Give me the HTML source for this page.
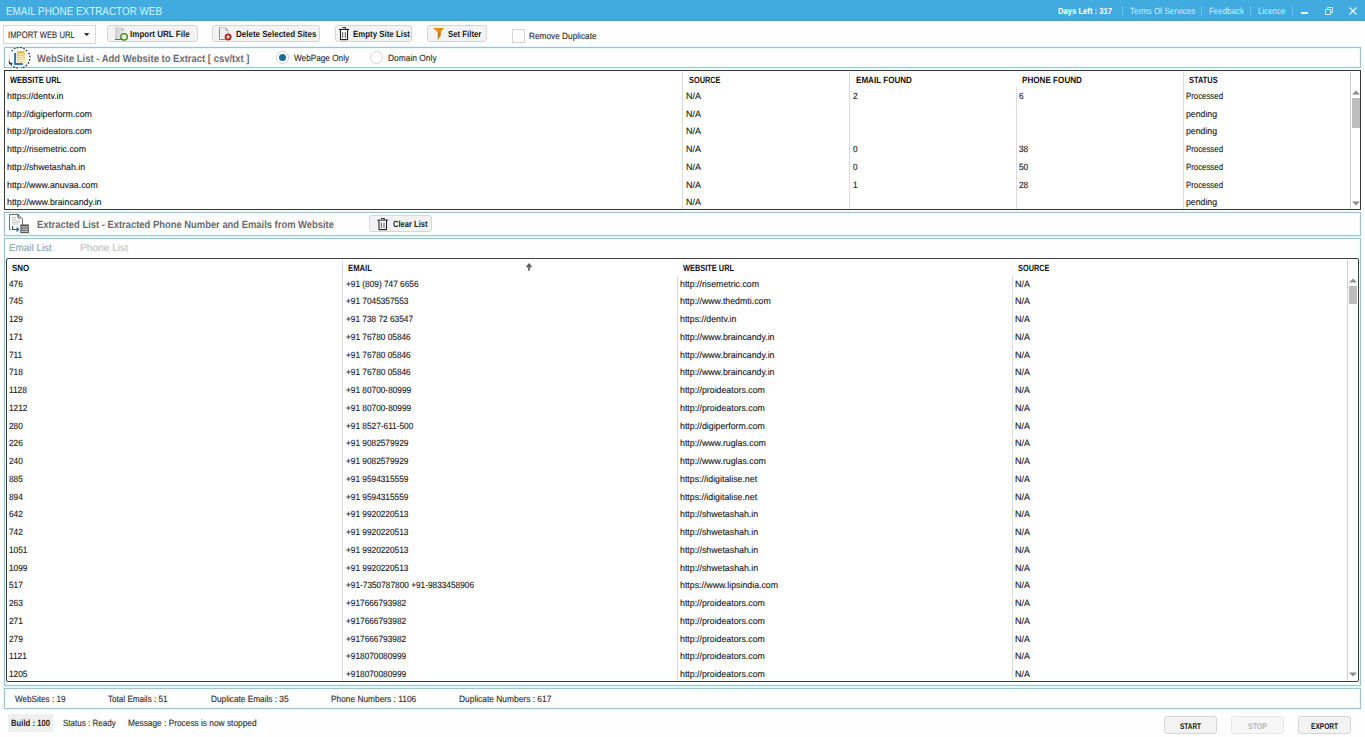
<!DOCTYPE html>
<html><head><meta charset="utf-8">
<style>
html,body{margin:0;padding:0;}
body{width:1365px;height:737px;position:relative;overflow:hidden;background:#fefefe;font-family:"Liberation Sans",sans-serif;}
.a{position:absolute;box-sizing:border-box;}
.t{position:absolute;white-space:nowrap;transform-origin:0 0;text-rendering:geometricPrecision;}
.btn{position:absolute;box-sizing:border-box;background:#f3f3f3;border:1px solid #d6d6d6;border-radius:3px;}
.pnl{position:absolute;box-sizing:border-box;border:1px solid #a2c3c8;background:#fefefe;box-shadow:0 0 0 1px #e4f7f9, inset 0 0 0 1px #eefafb;}
.w{-webkit-text-stroke:0.15px currentColor;}
.vl{position:absolute;width:1px;background:#dcdcdc;}
.sep{position:absolute;width:1px;background:#6fc0e6;top:6px;height:10px;}
</style></head><body>
<!-- title bar -->
<div class="a" style="left:0;top:0;width:1365px;height:20px;background:#41abe0;"></div>
<div class="a" style="left:0;top:20px;width:1365px;height:1px;background:#4d9cc2;"></div>
<div class="a" style="left:0;top:21px;width:1365px;height:1px;background:#e2f8fc;"></div>
<div class="sep" style="left:1122px"></div>
<div class="sep" style="left:1201px"></div>
<div class="sep" style="left:1250px"></div>
<div class="sep" style="left:1292px"></div>
<div class="a" style="left:1301px;top:12px;width:7px;height:2px;background:#e8f7fd;"></div>
<svg class="a" style="left:1324px;top:6px" width="10" height="9" viewBox="0 0 10 9"><rect x="1.5" y="3.5" width="5" height="5" fill="none" stroke="#dcf1fa" stroke-width="0.9"/><path d="M3.5 3.5V1.5H8.5V6.5H6.5" fill="none" stroke="#dcf1fa" stroke-width="0.9"/></svg>
<svg class="a" style="left:1349px;top:7px" width="8" height="8" viewBox="0 0 8 8"><path d="M0.5 0.5L7.5 7.5M7.5 0.5L0.5 7.5" stroke="#eef9ff" stroke-width="1.1"/></svg>

<!-- toolbar -->
<div class="a" style="left:3px;top:25px;width:93px;height:19px;background:#fff;border:1px solid #d9d9d9;"></div>
<svg class="a" style="left:84px;top:33px" width="6" height="4"><path d="M0 0H5.4L2.7 3.3Z" fill="#333"/></svg>
<div class="btn" style="left:107px;top:25px;width:91px;height:17px;"></div>
<div class="btn" style="left:212px;top:25px;width:108px;height:17px;"></div>
<div class="btn" style="left:335px;top:25px;width:77px;height:17px;"></div>
<div class="btn" style="left:427px;top:25px;width:60px;height:17px;"></div>
<div class="a" style="left:512px;top:29px;width:13px;height:14px;background:#fff;border:1px solid #d4d4d4;"></div>

<!-- website list header panel -->
<div class="pnl" style="left:4px;top:47px;width:1357px;height:21px;"></div>
<div class="a" style="left:276px;top:51px;width:13px;height:13px;border-radius:50%;border:1px solid #cfcfcf;background:#fff;"></div>
<div class="a" style="left:279px;top:54px;width:7px;height:7px;border-radius:50%;background:#1b6a98;"></div>
<div class="a" style="left:370px;top:51px;width:13px;height:13px;border-radius:50%;border:1px solid #d4d4d4;background:#fff;"></div>

<!-- table 1 -->
<div class="a" style="left:4px;top:70px;width:1357px;height:140px;border:1px solid #383838;background:#fff;"></div>
<div class="vl" style="left:682px;top:72px;height:137px"></div>
<div class="vl" style="left:849px;top:72px;height:137px"></div>
<div class="vl" style="left:1016px;top:87px;height:122px"></div>
<div class="vl" style="left:1183px;top:72px;height:137px"></div>
<div class="vl" style="left:1350px;top:72px;height:137px;background:#d0d0d0"></div>
<svg class="a" style="left:1352px;top:90px" width="8" height="5"><path d="M0 4.5L4 0.5L8 4.5Z" fill="#8c8c8c"/></svg>
<div class="a" style="left:1352px;top:98px;width:8px;height:30px;background:#bdbdbd;"></div>
<svg class="a" style="left:1352px;top:201px" width="8" height="5"><path d="M0 0.5H8L4 4.5Z" fill="#8c8c8c"/></svg>

<!-- extracted header panel -->
<div class="pnl" style="left:4px;top:212px;width:1357px;height:24px;"></div>
<div class="btn" style="left:369px;top:215px;width:63px;height:17px;"></div>

<!-- tab panel -->
<div class="pnl" style="left:4px;top:238px;width:1357px;height:448px;"></div>
<!-- table 2 -->
<div class="a" style="left:6px;top:258px;width:1353px;height:424px;border:1px solid #3c3c3c;border-radius:2px;background:#fff;"></div>
<div class="vl" style="left:342px;top:260px;height:421px"></div>
<div class="vl" style="left:677px;top:275px;height:406px"></div>
<div class="vl" style="left:1012px;top:275px;height:406px"></div>
<div class="vl" style="left:1347px;top:260px;height:421px;background:#d0d0d0"></div>
<svg class="a" style="left:1349px;top:278px" width="8" height="5"><path d="M0 4.5L4 0.5L8 4.5Z" fill="#8c8c8c"/></svg>
<div class="a" style="left:1349px;top:286px;width:8px;height:18px;background:#bdbdbd;"></div>
<svg class="a" style="left:1349px;top:672px" width="8" height="5"><path d="M0 0.5H8L4 4.5Z" fill="#8c8c8c"/></svg>
<svg class="a" style="left:525px;top:263px" width="8" height="9"><path d="M4 1.5V7.8" stroke="#5a5a5a" stroke-width="1.7"/><path d="M1.6 4.3L4 1.3L6.4 4.3" fill="none" stroke="#5a5a5a" stroke-width="1.6"/></svg>

<!-- stats panel -->
<div class="pnl" style="left:4px;top:688px;width:1357px;height:21px;"></div>

<!-- status bar -->
<div class="a" style="left:8px;top:714px;width:45px;height:18px;background:#f0f0f0;"></div>
<div class="btn" style="left:1164px;top:716px;width:53px;height:18px;"></div>
<div class="btn" style="left:1231px;top:716px;width:53px;height:18px;background:#f7f7f7;border-color:#e6e6e6"></div>
<div class="btn" style="left:1298px;top:716px;width:53px;height:18px;"></div>


<!-- import url file icon -->
<svg class="a" style="left:114px;top:26px" width="16" height="16" viewBox="0 0 16 16">
<defs><linearGradient id="gd" x1="0" y1="0" x2="1" y2="0"><stop offset="0" stop-color="#cfcfcf"/><stop offset="1" stop-color="#ededed"/></linearGradient></defs>
<path d="M1 1H7.5L11 4.5V13.5H1Z" fill="url(#gd)"/>
<path d="M7.5 1V4.5H11" fill="#bdbdbd"/>
<path d="M1 13.5H7" stroke="#555" stroke-width="0.9"/>
<circle cx="10.1" cy="10.8" r="3.3" fill="#c7e9a3" stroke="#3c7a1f" stroke-width="1.2"/>
<path d="M10.1 8.9V12.7M8.2 10.8H12" stroke="#f4fff0" stroke-width="1.1"/>
</svg>
<!-- delete icon -->
<svg class="a" style="left:218px;top:26px" width="16" height="16" viewBox="0 0 16 16">
<path d="M1.5 1.5H7.5L10.5 4.5V13.5H1.5Z" fill="#efefef"/>
<path d="M1.5 1.5H7.5L10.5 4.5V8" fill="none" stroke="#c8c8c8" stroke-width="0.9"/>
<path d="M1.5 1.5V13.5H7" fill="none" stroke="#8f8f8f" stroke-width="1"/>
<path d="M7.5 1.5V4.5H10.5Z" fill="#9a9a9a"/>
<circle cx="10.1" cy="10.9" r="3.5" fill="#a32e1d"/>
<circle cx="10.1" cy="10.9" r="1.7" fill="#efb09e"/>
<path d="M9.2 10L11 11.8M11 10L9.2 11.8" stroke="#fff6f2" stroke-width="0.8"/>
</svg>
<!-- empty site list trash -->
<svg class="a" style="left:338px;top:26px" width="12" height="15" viewBox="0 0 12 15">
<path d="M4.5 1.5H7.5V3" fill="none" stroke="#333" stroke-width="1"/>
<path d="M1 3.5H11" stroke="#222" stroke-width="1.3"/>
<path d="M2.5 4V13.5H9.5V4" fill="#fff" stroke="#222" stroke-width="1.1"/>
<path d="M2.5 13.6H9.5" stroke="#222" stroke-width="1.2"/>
<path d="M4.7 6V12M7.3 6V12" stroke="#444" stroke-width="0.9"/>
</svg>
<!-- filter funnel -->
<svg class="a" style="left:432px;top:27px" width="13" height="14" viewBox="0 0 13 14">
<path d="M1 1H12L8.6 5.2V8.5L5.8 12.8V5.2Z" fill="#e88a12"/>
<path d="M5.8 5.2L8.6 5.2V8.5L5.8 12.8Z" fill="#d07a10"/>
</svg>
<!-- website list icon -->
<svg class="a" style="left:7px;top:46px" width="25" height="23" viewBox="0 0 25 23">
<defs><linearGradient id="yd" x1="0" y1="0" x2="0" y2="1"><stop offset="0" stop-color="#f3b64c"/><stop offset="1" stop-color="#fbe3a0"/></linearGradient></defs>
<path d="M4.5 5.2A10.2 10.2 0 0 1 20.5 5.5" fill="none" stroke="#1b2f47" stroke-width="1.2" stroke-dasharray="1.8 1.4"/>
<path d="M21.6 6.8A10.2 10.2 0 0 1 14 21.9" fill="none" stroke="#1b2f47" stroke-width="1.2" stroke-dasharray="1.8 1.4"/>
<path d="M11 22A10.2 10.2 0 0 1 3 17" fill="none" stroke="#1b2f47" stroke-width="1.2" stroke-dasharray="1.8 1.4"/>
<path d="M2.5 14A10.2 10.2 0 0 1 3.2 7.8" fill="none" stroke="#9aa7b3" stroke-width="1" stroke-dasharray="1.5 1.5"/>
<path d="M2.2 14.8L2.8 17.8L5.6 17" fill="none" stroke="#1b2f47" stroke-width="1.2"/>
<rect x="10" y="5" width="7.8" height="11.6" fill="url(#yd)"/>
<path d="M11 8.5H17M11 10.5H17M11 12.5H17M11 14.5H17" stroke="#fff3cf" stroke-width="0.8"/>
<path d="M8.1 7V18.1H15.8" fill="none" stroke="#2a75b3" stroke-width="2"/>
</svg>
<!-- extracted icon -->
<svg class="a" style="left:8px;top:213px" width="22" height="22" viewBox="0 0 22 22">
<path d="M1.5 1.5H10L14.5 5.5V13" fill="none" stroke="#5f5f5f" stroke-width="0.9"/>
<path d="M1.5 1.5V16.5H3" fill="none" stroke="#5f5f5f" stroke-width="0.9"/>
<path d="M10 1.5V4.5L12.5 5.5" fill="none" stroke="#333" stroke-width="1"/>
<path d="M3.5 4.5H8M3.5 6H8M3.5 7.8H12M3.5 9.5H12M3.5 11H10" stroke="#c4c4c4" stroke-width="0.9"/>
<path d="M4.6 13V16.5H9.5" fill="none" stroke="#34577e" stroke-width="1.2"/>
<path d="M8.5 14.5L10.6 16.5L8.5 18.5" fill="none" stroke="#34577e" stroke-width="1.2"/>
<rect x="12.3" y="11.4" width="8.6" height="8.8" fill="#5a5a5a"/>
<path d="M13.3 14H20M13.3 16.2H20M13.3 18.3H20" stroke="#e8e8e8" stroke-width="0.9"/>
</svg>
<!-- clear list trash -->
<svg class="a" style="left:377px;top:217px" width="12" height="14" viewBox="0 0 12 14">
<path d="M4 1.5H7.5V2.8" fill="none" stroke="#333" stroke-width="1"/>
<path d="M0.5 3.2H11" stroke="#222" stroke-width="1.2"/>
<path d="M2 3.8V12.5H9.5V3.8" fill="#fff" stroke="#222" stroke-width="1.1"/>
<path d="M2 12.6H9.5" stroke="#222" stroke-width="1.2"/>
<path d="M4.3 5.5V11M7 5.5V11" stroke="#444" stroke-width="0.9"/>
</svg>

<span class='t w' style='left:6.0px;top:7px;font-size:11.5px;line-height:11.5px;font-weight:400;color:#d2f6ff;transform:scaleX(0.860);-webkit-text-stroke:0;'>EMAIL PHONE EXTRACTOR WEB</span>
<span class='t' style='left:1058.0px;top:7px;font-size:8.8px;line-height:8.8px;font-weight:700;color:#ffffff;transform:scaleX(0.870);'>Days Left : 317</span>
<span class='t w' style='left:1129.7px;top:7px;font-size:9px;line-height:9px;font-weight:400;color:#cfeefa;transform:scaleX(0.886);-webkit-text-stroke:0;'>Terms Of Services</span>
<span class='t w' style='left:1208.7px;top:7px;font-size:9px;line-height:9px;font-weight:400;color:#cfeefa;transform:scaleX(0.883);-webkit-text-stroke:0;'>Feedback</span>
<span class='t w' style='left:1257.9px;top:7px;font-size:9px;line-height:9px;font-weight:400;color:#cfeefa;transform:scaleX(0.883);-webkit-text-stroke:0;'>Licence</span>
<span class='t w' style='left:7.9px;top:31px;font-size:9.5px;line-height:9.5px;font-weight:400;color:#333;transform:scaleX(0.809);'>IMPORT WEB URL</span>
<span class='t' style='left:130.3px;top:30px;font-size:9px;line-height:9px;font-weight:700;color:#1a1a1a;transform:scaleX(0.893);'>Import URL File</span>
<span class='t' style='left:235.6px;top:30px;font-size:9px;line-height:9px;font-weight:700;color:#1a1a1a;transform:scaleX(0.888);'>Delete Selected Sites</span>
<span class='t' style='left:352.6px;top:30px;font-size:9px;line-height:9px;font-weight:700;color:#1a1a1a;transform:scaleX(0.875);'>Empty Site List</span>
<span class='t' style='left:447.8px;top:30px;font-size:9px;line-height:9px;font-weight:700;color:#1a1a1a;transform:scaleX(0.867);'>Set Filter</span>
<span class='t w' style='left:529.0px;top:32px;font-size:9px;line-height:9px;font-weight:400;color:#333;transform:scaleX(0.919);'>Remove Duplicate</span>
<span class='t' style='left:36.5px;top:54px;font-size:10.5px;line-height:10.5px;font-weight:700;color:#6b6b6b;transform:scaleX(0.902);'>WebSite List - Add Website to Extract [ csv/txt ]</span>
<span class='t w' style='left:293.8px;top:54px;font-size:9px;line-height:9px;font-weight:400;color:#333;transform:scaleX(0.913);'>WebPage Only</span>
<span class='t w' style='left:388.0px;top:54px;font-size:9px;line-height:9px;font-weight:400;color:#333;transform:scaleX(0.934);'>Domain Only</span>
<span class='t' style='left:9.7px;top:76px;font-size:9px;line-height:9px;font-weight:700;color:#111;transform:scaleX(0.823);'>WEBSITE URL</span>
<span class='t' style='left:688.8px;top:76px;font-size:9px;line-height:9px;font-weight:700;color:#111;transform:scaleX(0.818);'>SOURCE</span>
<span class='t' style='left:855.6px;top:76px;font-size:9px;line-height:9px;font-weight:700;color:#111;transform:scaleX(0.897);'>EMAIL FOUND</span>
<span class='t' style='left:1021.9px;top:76px;font-size:9px;line-height:9px;font-weight:700;color:#111;transform:scaleX(0.902);'>PHONE FOUND</span>
<span class='t' style='left:1189.0px;top:76px;font-size:9px;line-height:9px;font-weight:700;color:#111;transform:scaleX(0.828);'>STATUS</span>
<span class='t w' style='left:6.9px;top:92px;font-size:9px;line-height:9px;font-weight:400;color:#252525;transform:scaleX(0.975);'>https://dentv.in</span>
<span class='t w' style='left:686.0px;top:92px;font-size:9px;line-height:9px;font-weight:400;color:#252525;'>N/A</span>
<span class='t w' style='left:852.8px;top:92px;font-size:9px;line-height:9px;font-weight:400;color:#252525;transform:scaleX(0.920);'>2</span>
<span class='t w' style='left:1019.0px;top:92px;font-size:9px;line-height:9px;font-weight:400;color:#252525;transform:scaleX(0.920);'>6</span>
<span class='t w' style='left:1186.3px;top:92px;font-size:9px;line-height:9px;font-weight:400;color:#252525;transform:scaleX(0.870);'>Processed</span>
<span class='t w' style='left:6.9px;top:110px;font-size:9px;line-height:9px;font-weight:400;color:#252525;transform:scaleX(0.975);'>http://digiperform.com</span>
<span class='t w' style='left:686.0px;top:110px;font-size:9px;line-height:9px;font-weight:400;color:#252525;'>N/A</span>
<span class='t w' style='left:1186.3px;top:110px;font-size:9px;line-height:9px;font-weight:400;color:#252525;transform:scaleX(0.970);'>pending</span>
<span class='t w' style='left:6.9px;top:127px;font-size:9px;line-height:9px;font-weight:400;color:#252525;transform:scaleX(0.975);'>http://proideators.com</span>
<span class='t w' style='left:686.0px;top:127px;font-size:9px;line-height:9px;font-weight:400;color:#252525;'>N/A</span>
<span class='t w' style='left:1186.3px;top:127px;font-size:9px;line-height:9px;font-weight:400;color:#252525;transform:scaleX(0.970);'>pending</span>
<span class='t w' style='left:6.9px;top:145px;font-size:9px;line-height:9px;font-weight:400;color:#252525;transform:scaleX(0.975);'>http://risemetric.com</span>
<span class='t w' style='left:686.0px;top:145px;font-size:9px;line-height:9px;font-weight:400;color:#252525;'>N/A</span>
<span class='t w' style='left:852.8px;top:145px;font-size:9px;line-height:9px;font-weight:400;color:#252525;transform:scaleX(0.920);'>0</span>
<span class='t w' style='left:1019.0px;top:145px;font-size:9px;line-height:9px;font-weight:400;color:#252525;transform:scaleX(0.920);'>38</span>
<span class='t w' style='left:1186.3px;top:145px;font-size:9px;line-height:9px;font-weight:400;color:#252525;transform:scaleX(0.870);'>Processed</span>
<span class='t w' style='left:6.9px;top:163px;font-size:9px;line-height:9px;font-weight:400;color:#252525;transform:scaleX(0.975);'>http://shwetashah.in</span>
<span class='t w' style='left:686.0px;top:163px;font-size:9px;line-height:9px;font-weight:400;color:#252525;'>N/A</span>
<span class='t w' style='left:852.8px;top:163px;font-size:9px;line-height:9px;font-weight:400;color:#252525;transform:scaleX(0.920);'>0</span>
<span class='t w' style='left:1019.0px;top:163px;font-size:9px;line-height:9px;font-weight:400;color:#252525;transform:scaleX(0.920);'>50</span>
<span class='t w' style='left:1186.3px;top:163px;font-size:9px;line-height:9px;font-weight:400;color:#252525;transform:scaleX(0.870);'>Processed</span>
<span class='t w' style='left:6.9px;top:181px;font-size:9px;line-height:9px;font-weight:400;color:#252525;transform:scaleX(0.975);'>http://www.anuvaa.com</span>
<span class='t w' style='left:686.0px;top:181px;font-size:9px;line-height:9px;font-weight:400;color:#252525;'>N/A</span>
<span class='t w' style='left:852.8px;top:181px;font-size:9px;line-height:9px;font-weight:400;color:#252525;transform:scaleX(0.920);'>1</span>
<span class='t w' style='left:1019.0px;top:181px;font-size:9px;line-height:9px;font-weight:400;color:#252525;transform:scaleX(0.920);'>28</span>
<span class='t w' style='left:1186.3px;top:181px;font-size:9px;line-height:9px;font-weight:400;color:#252525;transform:scaleX(0.870);'>Processed</span>
<span class='t w' style='left:6.9px;top:198px;font-size:9px;line-height:9px;font-weight:400;color:#252525;transform:scaleX(0.975);'>http://www.braincandy.in</span>
<span class='t w' style='left:686.0px;top:198px;font-size:9px;line-height:9px;font-weight:400;color:#252525;'>N/A</span>
<span class='t w' style='left:1186.3px;top:198px;font-size:9px;line-height:9px;font-weight:400;color:#252525;transform:scaleX(0.970);'>pending</span>
<span class='t' style='left:36.9px;top:220px;font-size:10.5px;line-height:10.5px;font-weight:700;color:#6b6b6b;transform:scaleX(0.895);'>Extracted List - Extracted Phone Number and Emails from Website</span>
<span class='t' style='left:393.3px;top:220px;font-size:9px;line-height:9px;font-weight:700;color:#1a1a1a;transform:scaleX(0.844);'>Clear List</span>
<span class='t w' style='left:9.2px;top:244px;font-size:10px;line-height:10px;font-weight:400;color:#8aabb8;transform:scaleX(0.987);'>Email List</span>
<span class='t w' style='left:80.0px;top:244px;font-size:10px;line-height:10px;font-weight:400;color:#c4c4c4;transform:scaleX(1.016);'>Phone List</span>
<span class='t' style='left:12.2px;top:264px;font-size:9px;line-height:9px;font-weight:700;color:#111;transform:scaleX(0.876);'>SNO</span>
<span class='t' style='left:347.9px;top:264px;font-size:9px;line-height:9px;font-weight:700;color:#111;transform:scaleX(0.854);'>EMAIL</span>
<span class='t' style='left:682.9px;top:264px;font-size:9px;line-height:9px;font-weight:700;color:#111;transform:scaleX(0.824);'>WEBSITE URL</span>
<span class='t' style='left:1017.8px;top:264px;font-size:9px;line-height:9px;font-weight:700;color:#111;transform:scaleX(0.818);'>SOURCE</span>
<span class='t w' style='left:9.4px;top:280px;font-size:9px;line-height:9px;font-weight:400;color:#252525;transform:scaleX(0.920);'>476</span>
<span class='t w' style='left:345.8px;top:280px;font-size:9px;line-height:9px;font-weight:400;color:#252525;transform:scaleX(0.920);'>+91 (809) 747 6656</span>
<span class='t w' style='left:680.0px;top:280px;font-size:9px;line-height:9px;font-weight:400;color:#252525;transform:scaleX(0.975);'>http://risemetric.com</span>
<span class='t w' style='left:1015.0px;top:280px;font-size:9px;line-height:9px;font-weight:400;color:#252525;'>N/A</span>
<span class='t w' style='left:9.4px;top:297px;font-size:9px;line-height:9px;font-weight:400;color:#252525;transform:scaleX(0.920);'>745</span>
<span class='t w' style='left:345.8px;top:297px;font-size:9px;line-height:9px;font-weight:400;color:#252525;transform:scaleX(0.920);'>+91 7045357553</span>
<span class='t w' style='left:680.0px;top:297px;font-size:9px;line-height:9px;font-weight:400;color:#252525;transform:scaleX(0.975);'>http://www.thedmti.com</span>
<span class='t w' style='left:1015.0px;top:297px;font-size:9px;line-height:9px;font-weight:400;color:#252525;'>N/A</span>
<span class='t w' style='left:9.4px;top:315px;font-size:9px;line-height:9px;font-weight:400;color:#252525;transform:scaleX(0.920);'>129</span>
<span class='t w' style='left:345.8px;top:315px;font-size:9px;line-height:9px;font-weight:400;color:#252525;transform:scaleX(0.920);'>+91 738 72 63547</span>
<span class='t w' style='left:680.0px;top:315px;font-size:9px;line-height:9px;font-weight:400;color:#252525;transform:scaleX(0.975);'>https://dentv.in</span>
<span class='t w' style='left:1015.0px;top:315px;font-size:9px;line-height:9px;font-weight:400;color:#252525;'>N/A</span>
<span class='t w' style='left:9.4px;top:333px;font-size:9px;line-height:9px;font-weight:400;color:#252525;transform:scaleX(0.920);'>171</span>
<span class='t w' style='left:345.8px;top:333px;font-size:9px;line-height:9px;font-weight:400;color:#252525;transform:scaleX(0.920);'>+91 76780 05846</span>
<span class='t w' style='left:680.0px;top:333px;font-size:9px;line-height:9px;font-weight:400;color:#252525;transform:scaleX(0.975);'>http://www.braincandy.in</span>
<span class='t w' style='left:1015.0px;top:333px;font-size:9px;line-height:9px;font-weight:400;color:#252525;'>N/A</span>
<span class='t w' style='left:9.4px;top:351px;font-size:9px;line-height:9px;font-weight:400;color:#252525;transform:scaleX(0.920);'>711</span>
<span class='t w' style='left:345.8px;top:351px;font-size:9px;line-height:9px;font-weight:400;color:#252525;transform:scaleX(0.920);'>+91 76780 05846</span>
<span class='t w' style='left:680.0px;top:351px;font-size:9px;line-height:9px;font-weight:400;color:#252525;transform:scaleX(0.975);'>http://www.braincandy.in</span>
<span class='t w' style='left:1015.0px;top:351px;font-size:9px;line-height:9px;font-weight:400;color:#252525;'>N/A</span>
<span class='t w' style='left:9.4px;top:368px;font-size:9px;line-height:9px;font-weight:400;color:#252525;transform:scaleX(0.920);'>718</span>
<span class='t w' style='left:345.8px;top:368px;font-size:9px;line-height:9px;font-weight:400;color:#252525;transform:scaleX(0.920);'>+91 76780 05846</span>
<span class='t w' style='left:680.0px;top:368px;font-size:9px;line-height:9px;font-weight:400;color:#252525;transform:scaleX(0.975);'>http://www.braincandy.in</span>
<span class='t w' style='left:1015.0px;top:368px;font-size:9px;line-height:9px;font-weight:400;color:#252525;'>N/A</span>
<span class='t w' style='left:9.4px;top:386px;font-size:9px;line-height:9px;font-weight:400;color:#252525;transform:scaleX(0.920);'>1128</span>
<span class='t w' style='left:345.8px;top:386px;font-size:9px;line-height:9px;font-weight:400;color:#252525;transform:scaleX(0.920);'>+91 80700-80999</span>
<span class='t w' style='left:680.0px;top:386px;font-size:9px;line-height:9px;font-weight:400;color:#252525;transform:scaleX(0.975);'>http://proideators.com</span>
<span class='t w' style='left:1015.0px;top:386px;font-size:9px;line-height:9px;font-weight:400;color:#252525;'>N/A</span>
<span class='t w' style='left:9.4px;top:404px;font-size:9px;line-height:9px;font-weight:400;color:#252525;transform:scaleX(0.920);'>1212</span>
<span class='t w' style='left:345.8px;top:404px;font-size:9px;line-height:9px;font-weight:400;color:#252525;transform:scaleX(0.920);'>+91 80700-80999</span>
<span class='t w' style='left:680.0px;top:404px;font-size:9px;line-height:9px;font-weight:400;color:#252525;transform:scaleX(0.975);'>http://proideators.com</span>
<span class='t w' style='left:1015.0px;top:404px;font-size:9px;line-height:9px;font-weight:400;color:#252525;'>N/A</span>
<span class='t w' style='left:9.4px;top:422px;font-size:9px;line-height:9px;font-weight:400;color:#252525;transform:scaleX(0.920);'>280</span>
<span class='t w' style='left:345.8px;top:422px;font-size:9px;line-height:9px;font-weight:400;color:#252525;transform:scaleX(0.920);'>+91 8527-611-500</span>
<span class='t w' style='left:680.0px;top:422px;font-size:9px;line-height:9px;font-weight:400;color:#252525;transform:scaleX(0.975);'>http://digiperform.com</span>
<span class='t w' style='left:1015.0px;top:422px;font-size:9px;line-height:9px;font-weight:400;color:#252525;'>N/A</span>
<span class='t w' style='left:9.4px;top:439px;font-size:9px;line-height:9px;font-weight:400;color:#252525;transform:scaleX(0.920);'>226</span>
<span class='t w' style='left:345.8px;top:439px;font-size:9px;line-height:9px;font-weight:400;color:#252525;transform:scaleX(0.920);'>+91 9082579929</span>
<span class='t w' style='left:680.0px;top:439px;font-size:9px;line-height:9px;font-weight:400;color:#252525;transform:scaleX(0.975);'>http://www.ruglas.com</span>
<span class='t w' style='left:1015.0px;top:439px;font-size:9px;line-height:9px;font-weight:400;color:#252525;'>N/A</span>
<span class='t w' style='left:9.4px;top:457px;font-size:9px;line-height:9px;font-weight:400;color:#252525;transform:scaleX(0.920);'>240</span>
<span class='t w' style='left:345.8px;top:457px;font-size:9px;line-height:9px;font-weight:400;color:#252525;transform:scaleX(0.920);'>+91 9082579929</span>
<span class='t w' style='left:680.0px;top:457px;font-size:9px;line-height:9px;font-weight:400;color:#252525;transform:scaleX(0.975);'>http://www.ruglas.com</span>
<span class='t w' style='left:1015.0px;top:457px;font-size:9px;line-height:9px;font-weight:400;color:#252525;'>N/A</span>
<span class='t w' style='left:9.4px;top:475px;font-size:9px;line-height:9px;font-weight:400;color:#252525;transform:scaleX(0.920);'>885</span>
<span class='t w' style='left:345.8px;top:475px;font-size:9px;line-height:9px;font-weight:400;color:#252525;transform:scaleX(0.920);'>+91 9594315559</span>
<span class='t w' style='left:680.0px;top:475px;font-size:9px;line-height:9px;font-weight:400;color:#252525;transform:scaleX(0.975);'>https://idigitalise.net</span>
<span class='t w' style='left:1015.0px;top:475px;font-size:9px;line-height:9px;font-weight:400;color:#252525;'>N/A</span>
<span class='t w' style='left:9.4px;top:493px;font-size:9px;line-height:9px;font-weight:400;color:#252525;transform:scaleX(0.920);'>894</span>
<span class='t w' style='left:345.8px;top:493px;font-size:9px;line-height:9px;font-weight:400;color:#252525;transform:scaleX(0.920);'>+91 9594315559</span>
<span class='t w' style='left:680.0px;top:493px;font-size:9px;line-height:9px;font-weight:400;color:#252525;transform:scaleX(0.975);'>https://idigitalise.net</span>
<span class='t w' style='left:1015.0px;top:493px;font-size:9px;line-height:9px;font-weight:400;color:#252525;'>N/A</span>
<span class='t w' style='left:9.4px;top:510px;font-size:9px;line-height:9px;font-weight:400;color:#252525;transform:scaleX(0.920);'>642</span>
<span class='t w' style='left:345.8px;top:510px;font-size:9px;line-height:9px;font-weight:400;color:#252525;transform:scaleX(0.920);'>+91 9920220513</span>
<span class='t w' style='left:680.0px;top:510px;font-size:9px;line-height:9px;font-weight:400;color:#252525;transform:scaleX(0.975);'>http://shwetashah.in</span>
<span class='t w' style='left:1015.0px;top:510px;font-size:9px;line-height:9px;font-weight:400;color:#252525;'>N/A</span>
<span class='t w' style='left:9.4px;top:528px;font-size:9px;line-height:9px;font-weight:400;color:#252525;transform:scaleX(0.920);'>742</span>
<span class='t w' style='left:345.8px;top:528px;font-size:9px;line-height:9px;font-weight:400;color:#252525;transform:scaleX(0.920);'>+91 9920220513</span>
<span class='t w' style='left:680.0px;top:528px;font-size:9px;line-height:9px;font-weight:400;color:#252525;transform:scaleX(0.975);'>http://shwetashah.in</span>
<span class='t w' style='left:1015.0px;top:528px;font-size:9px;line-height:9px;font-weight:400;color:#252525;'>N/A</span>
<span class='t w' style='left:9.4px;top:546px;font-size:9px;line-height:9px;font-weight:400;color:#252525;transform:scaleX(0.920);'>1051</span>
<span class='t w' style='left:345.8px;top:546px;font-size:9px;line-height:9px;font-weight:400;color:#252525;transform:scaleX(0.920);'>+91 9920220513</span>
<span class='t w' style='left:680.0px;top:546px;font-size:9px;line-height:9px;font-weight:400;color:#252525;transform:scaleX(0.975);'>http://shwetashah.in</span>
<span class='t w' style='left:1015.0px;top:546px;font-size:9px;line-height:9px;font-weight:400;color:#252525;'>N/A</span>
<span class='t w' style='left:9.4px;top:564px;font-size:9px;line-height:9px;font-weight:400;color:#252525;transform:scaleX(0.920);'>1099</span>
<span class='t w' style='left:345.8px;top:564px;font-size:9px;line-height:9px;font-weight:400;color:#252525;transform:scaleX(0.920);'>+91 9920220513</span>
<span class='t w' style='left:680.0px;top:564px;font-size:9px;line-height:9px;font-weight:400;color:#252525;transform:scaleX(0.975);'>http://shwetashah.in</span>
<span class='t w' style='left:1015.0px;top:564px;font-size:9px;line-height:9px;font-weight:400;color:#252525;'>N/A</span>
<span class='t w' style='left:9.4px;top:581px;font-size:9px;line-height:9px;font-weight:400;color:#252525;transform:scaleX(0.920);'>517</span>
<span class='t w' style='left:345.8px;top:581px;font-size:9px;line-height:9px;font-weight:400;color:#252525;transform:scaleX(0.920);'>+91-7350787800 +91-9833458906</span>
<span class='t w' style='left:680.0px;top:581px;font-size:9px;line-height:9px;font-weight:400;color:#252525;transform:scaleX(0.975);'>https://www.lipsindia.com</span>
<span class='t w' style='left:1015.0px;top:581px;font-size:9px;line-height:9px;font-weight:400;color:#252525;'>N/A</span>
<span class='t w' style='left:9.4px;top:599px;font-size:9px;line-height:9px;font-weight:400;color:#252525;transform:scaleX(0.920);'>263</span>
<span class='t w' style='left:345.8px;top:599px;font-size:9px;line-height:9px;font-weight:400;color:#252525;transform:scaleX(0.920);'>+917666793982</span>
<span class='t w' style='left:680.0px;top:599px;font-size:9px;line-height:9px;font-weight:400;color:#252525;transform:scaleX(0.975);'>http://proideators.com</span>
<span class='t w' style='left:1015.0px;top:599px;font-size:9px;line-height:9px;font-weight:400;color:#252525;'>N/A</span>
<span class='t w' style='left:9.4px;top:617px;font-size:9px;line-height:9px;font-weight:400;color:#252525;transform:scaleX(0.920);'>271</span>
<span class='t w' style='left:345.8px;top:617px;font-size:9px;line-height:9px;font-weight:400;color:#252525;transform:scaleX(0.920);'>+917666793982</span>
<span class='t w' style='left:680.0px;top:617px;font-size:9px;line-height:9px;font-weight:400;color:#252525;transform:scaleX(0.975);'>http://proideators.com</span>
<span class='t w' style='left:1015.0px;top:617px;font-size:9px;line-height:9px;font-weight:400;color:#252525;'>N/A</span>
<span class='t w' style='left:9.4px;top:635px;font-size:9px;line-height:9px;font-weight:400;color:#252525;transform:scaleX(0.920);'>279</span>
<span class='t w' style='left:345.8px;top:635px;font-size:9px;line-height:9px;font-weight:400;color:#252525;transform:scaleX(0.920);'>+917666793982</span>
<span class='t w' style='left:680.0px;top:635px;font-size:9px;line-height:9px;font-weight:400;color:#252525;transform:scaleX(0.975);'>http://proideators.com</span>
<span class='t w' style='left:1015.0px;top:635px;font-size:9px;line-height:9px;font-weight:400;color:#252525;'>N/A</span>
<span class='t w' style='left:9.4px;top:652px;font-size:9px;line-height:9px;font-weight:400;color:#252525;transform:scaleX(0.920);'>1121</span>
<span class='t w' style='left:345.8px;top:652px;font-size:9px;line-height:9px;font-weight:400;color:#252525;transform:scaleX(0.920);'>+918070080999</span>
<span class='t w' style='left:680.0px;top:652px;font-size:9px;line-height:9px;font-weight:400;color:#252525;transform:scaleX(0.975);'>http://proideators.com</span>
<span class='t w' style='left:1015.0px;top:652px;font-size:9px;line-height:9px;font-weight:400;color:#252525;'>N/A</span>
<span class='t w' style='left:9.4px;top:670px;font-size:9px;line-height:9px;font-weight:400;color:#252525;transform:scaleX(0.920);'>1205</span>
<span class='t w' style='left:345.8px;top:670px;font-size:9px;line-height:9px;font-weight:400;color:#252525;transform:scaleX(0.920);'>+918070080999</span>
<span class='t w' style='left:680.0px;top:670px;font-size:9px;line-height:9px;font-weight:400;color:#252525;transform:scaleX(0.975);'>http://proideators.com</span>
<span class='t w' style='left:1015.0px;top:670px;font-size:9px;line-height:9px;font-weight:400;color:#252525;'>N/A</span>
<span class='t w' style='left:15.0px;top:695px;font-size:9px;line-height:9px;font-weight:400;color:#333;transform:scaleX(0.904);'>WebSites : 19</span>
<span class='t w' style='left:108.0px;top:695px;font-size:9px;line-height:9px;font-weight:400;color:#333;transform:scaleX(0.901);'>Total Emails : 51</span>
<span class='t w' style='left:210.5px;top:695px;font-size:9px;line-height:9px;font-weight:400;color:#333;transform:scaleX(0.917);'>Duplicate Emails : 35</span>
<span class='t w' style='left:330.8px;top:695px;font-size:9px;line-height:9px;font-weight:400;color:#333;transform:scaleX(0.927);'>Phone Numbers : 1106</span>
<span class='t w' style='left:459.3px;top:695px;font-size:9px;line-height:9px;font-weight:400;color:#333;transform:scaleX(0.932);'>Duplicate Numbers : 617</span>
<span class='t' style='left:11.0px;top:719px;font-size:9px;line-height:9px;font-weight:700;color:#222;transform:scaleX(0.857);'>Build : 100</span>
<span class='t w' style='left:63.3px;top:719px;font-size:9px;line-height:9px;font-weight:400;color:#333;transform:scaleX(0.893);'>Status : Ready</span>
<span class='t w' style='left:127.5px;top:719px;font-size:9px;line-height:9px;font-weight:400;color:#333;transform:scaleX(0.924);'>Message : Process is now stopped</span>
<span class='t' style='left:1180.0px;top:722px;font-size:8.3px;line-height:8.3px;font-weight:700;color:#111;transform:scaleX(0.776);'>START</span>
<span class='t' style='left:1248.0px;top:722px;font-size:8.3px;line-height:8.3px;font-weight:700;color:#b5b5b5;transform:scaleX(0.846);'>STOP</span>
<span class='t' style='left:1310.6px;top:722px;font-size:8.3px;line-height:8.3px;font-weight:700;color:#111;transform:scaleX(0.794);'>EXPORT</span>
</body></html>
